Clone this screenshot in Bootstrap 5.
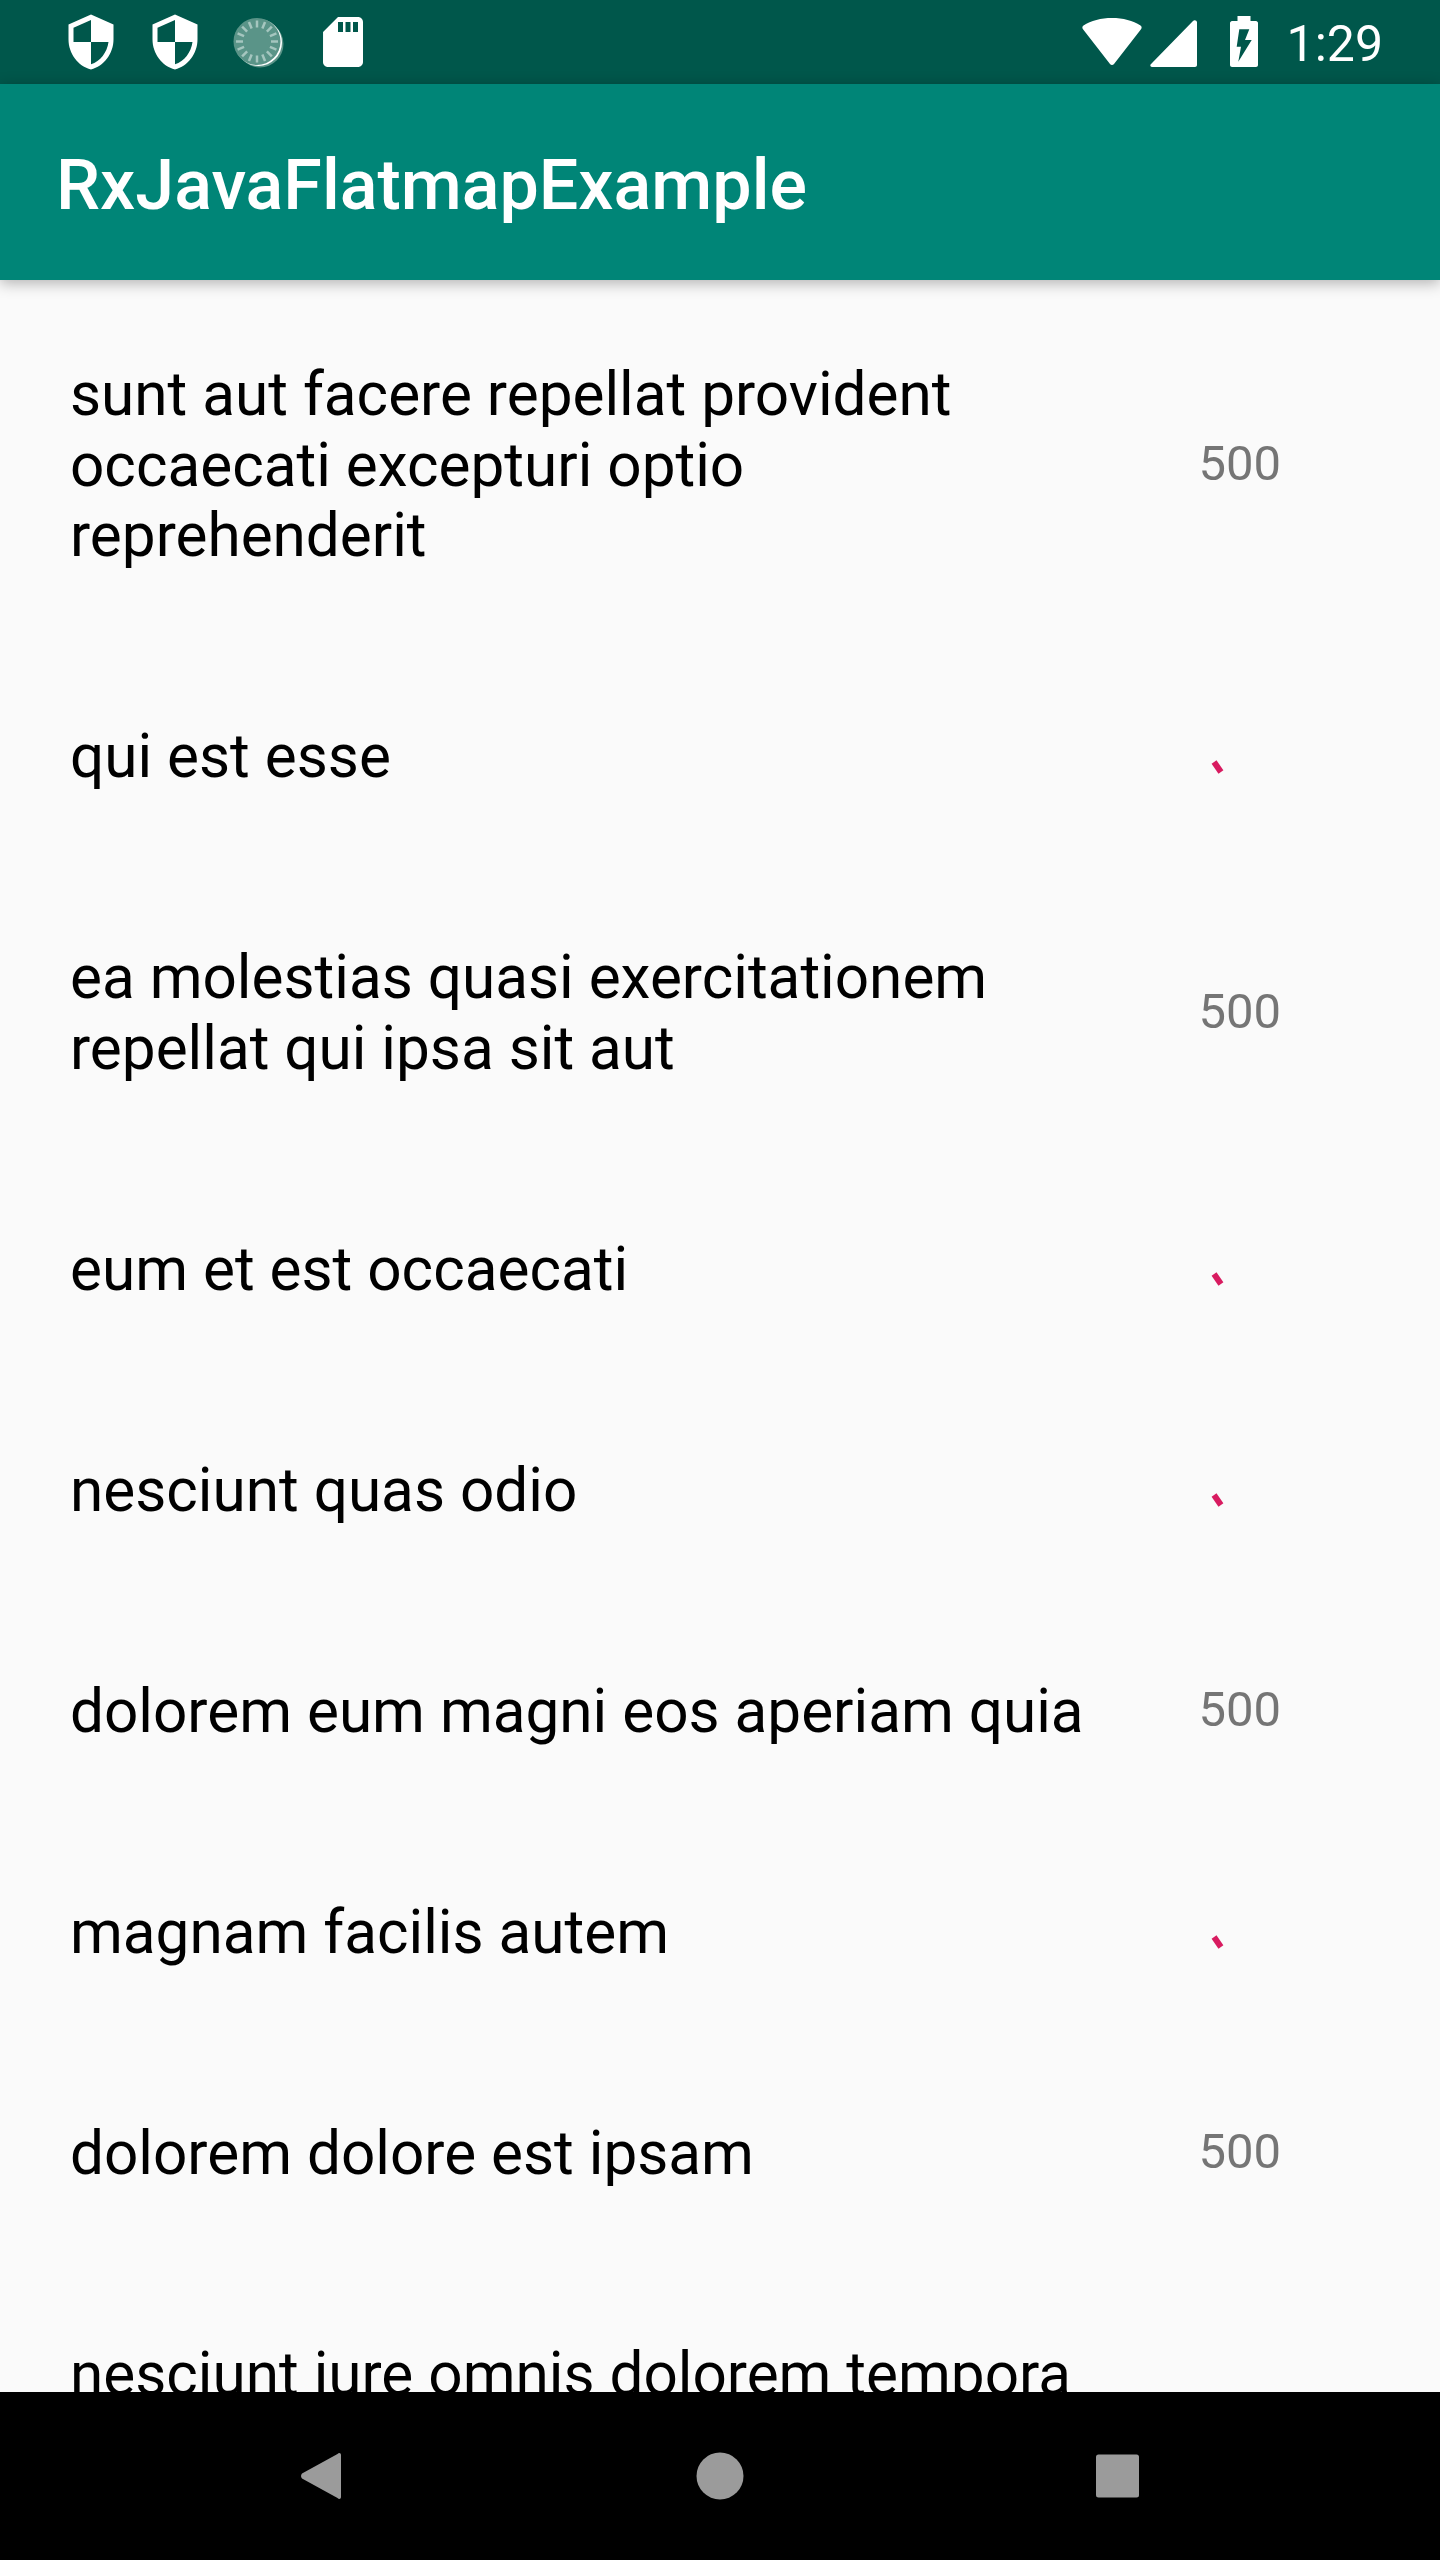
<!DOCTYPE html>
<html lang="en">
<head>
    <meta charset="UTF-8">
    <meta name="viewport" content="width=device-width, initial-scale=1.0">
    <title>RxJavaFlatmapExample</title>
    <link rel="stylesheet" href="https://cdn.jsdelivr.net/npm/bootstrap@5.3.3/dist/css/bootstrap.min.css">
    <style>
        body {
            width: 1440px;
            height: 2560px;
            overflow: hidden;
            background-color: #fafafa;
            font-family: Roboto, sans-serif;
        }

        .status-bar {
            height: 84px;
            background-color: #00574b;
            color: #fff;
            padding-left: 61px;
            padding-right: 57px;
        }

        .status-left { gap: 24px; }

        .status-battery { margin-left: 33px; }

        .status-time {
            font-size: 50px;
            line-height: 84px;
            padding-top: 3px;
            margin-left: 29px;
        }

        .app-bar {
            height: 196px;
            background-color: #008577;
            color: #fff;
            padding-left: 56px;
            padding-top: 6px;
            font-size: 70px;
            font-weight: 500;
            box-shadow: 0 3px 14px rgba(0, 0, 0, .3);
            position: relative;
            z-index: 1;
        }

        .post-list {
            min-height: 0;
            padding-top: 3px;
        }

        .post-row {
            padding: 75.25px 0 73.25px 70px;
        }

        .post-title {
            width: 1025px;
            padding-top: 2px;
            font-size: 60.25px;
            line-height: 70.5px;
            color: #000;
        }

        .post-side {
            width: 80px;
            margin-left: 103.5px;
            margin-bottom: 3px;
            font-size: 49px;
            line-height: 57px;
            color: #757575;
            text-align: center;
        }

        .nav-strip {
            height: 168px;
            background-color: #000;
            gap: 338px;
        }
    </style>
</head>
<body class="d-flex flex-column">

    <!-- status bar -->
    <div class="status-bar d-flex align-items-center justify-content-between flex-shrink-0">
        <div class="status-left d-flex align-items-center">
            <svg width="60" height="60" viewBox="0 0 24 24" fill="#fff"><path d="M12 1L3 5v6c0 5.55 3.84 10.74 9 12 5.16-1.26 9-6.45 9-12V5l-9-4zm0 10.99h7c-.53 4.12-3.28 7.79-7 8.94V12H5V6.3l7-3.11v8.8z"/></svg>
            <svg width="60" height="60" viewBox="0 0 24 24" fill="#fff"><path d="M12 1L3 5v6c0 5.55 3.84 10.74 9 12 5.16-1.26 9-6.45 9-12V5l-9-4zm0 10.99h7c-.53 4.12-3.28 7.79-7 8.94V12H5V6.3l7-3.11v8.8z"/></svg>
            <svg width="60" height="60" viewBox="0 0 60 60">
                <circle cx="31" cy="32" r="23.500" fill="#5a9488"/>
                <circle cx="29.500" cy="30.500" r="23.500" fill="#fff"/>
                <circle cx="28" cy="29.500" r="23.500" fill="#5a9488"/>
                <g id="disc-ticks" stroke="#a5c6bf" stroke-width="2.500"></g>
            </svg>
            <svg width="60" height="60" viewBox="0 0 24 24" fill="#fff"><path d="M18 2h-8L4.02 8 4 20c0 1.1.9 2 2 2h12c1.1 0 2-.9 2-2V4c0-1.1-.9-2-2-2zm-6 6h-2V4h2v4zm3 0h-2V4h2v4zm3 0h-2V4h2v4z"/></svg>
        </div>
        <div class="d-flex align-items-center">
            <svg width="60" height="60" viewBox="0 0 60 60" fill="#fff"><path d="M1.500 13.500C9 8.500 19 6 30 6s21 2.500 28.500 7.500c1.300.9 1.500 2.500.5 3.700L32 52c-1 1.300-3 1.300-4 0L1 17.200c-1-1.200-.8-2.800.5-3.700z"/></svg>
            <svg class="ms-2" width="47" height="60" viewBox="0 0 47 60" fill="#fff"><path d="M43 9c1.500-1.500 4-.5 4 1.500V53c0 1-1 2-2 2H2c-1.500 0-2.300-1.700-1.200-2.800z"/></svg>
            <svg class="status-battery" width="28" height="60" viewBox="0 0 28 60" fill="#fff"><path fill-rule="evenodd" d="M7.500 4h13v5H26c1 0 2 1 2 2v42c0 1-1 2-2 2H2c-1 0-2-1-2-2V11c0-1 1-2 2-2h5.500zM9.300 17.300h10L15 28h6.700L8.300 49.700 11 34.700H6.700z"/></svg>
            <span class="status-time">1:29</span>
        </div>
    </div>

    <!-- toolbar -->
    <div class="app-bar d-flex align-items-center flex-shrink-0">RxJavaFlatmapExample</div>

    <!-- posts -->
    <div class="post-list flex-grow-1 overflow-hidden" id="post-list"></div>

    <!-- nav bar -->
    <div class="nav-strip d-flex align-items-center justify-content-center flex-shrink-0">
        <svg width="60" height="60" viewBox="0 0 60 60" fill="#9b9b9b"><path d="M45.500 8c1.500-1.700 3.500-1 3.500 1v42c0 2-2 2.700-3.500 1L10 32.500c-1.300-1.500-1.300-3.500 0-5z"/></svg>
        <svg width="60" height="60" viewBox="0 0 60 60" fill="#9b9b9b"><circle cx="30" cy="30" r="23.500"/></svg>
        <svg width="60" height="60" viewBox="0 0 60 60" fill="#9b9b9b"><rect x="8" y="8.500" width="43" height="43" rx="2.500"/></svg>
    </div>

    <script>
        // ticks on the loading disc in the status bar
        const discTicks = document.getElementById('disc-ticks');
        let tickMarkup = '';
        for (let i = 0; i < 16; i++) {
            const a = i * Math.PI / 8;
            tickMarkup += '<line x1="' + (28 + 14 * Math.sin(a)) + '" y1="' + (29.5 - 14 * Math.cos(a)) +
                '" x2="' + (28 + 21 * Math.sin(a)) + '" y2="' + (29.5 - 21 * Math.cos(a)) + '"/>';
        }
        discTicks.innerHTML = tickMarkup;

        // title, and whether the row already got its count
        const posts = [
            ['sunt aut facere repellat provident occaecati excepturi optio reprehenderit', true],
            ['qui est esse', false],
            ['ea molestias quasi exercitationem repellat qui ipsa sit aut', true],
            ['eum et est occaecati', false],
            ['nesciunt quas odio', false],
            ['dolorem eum magni eos aperiam quia', true],
            ['magnam facilis autem', false],
            ['dolorem dolore est ipsam', true],
            ['nesciunt iure omnis dolorem tempora et accusantium', false]
        ];
        const list = document.getElementById('post-list');
        const tick = '<svg class="d-block" width="80" height="57" viewBox="0 0 80 57"><rect x="15.500" y="34" width="6" height="12" fill="#d81b60" transform="rotate(-35 18.500 40)"/></svg>';
        posts.forEach(([title, loaded]) => {
            const row = document.createElement('div');
            row.className = 'post-row d-flex align-items-center';
            row.innerHTML = '<div class="post-title">' + title + '</div>' +
                '<div class="post-side">' + (loaded ? '500' : tick) + '</div>';
            list.appendChild(row);
        });
    </script>
    <script src="https://cdn.jsdelivr.net/npm/bootstrap@5.3.3/dist/js/bootstrap.bundle.min.js"></script>
</body>
</html>
